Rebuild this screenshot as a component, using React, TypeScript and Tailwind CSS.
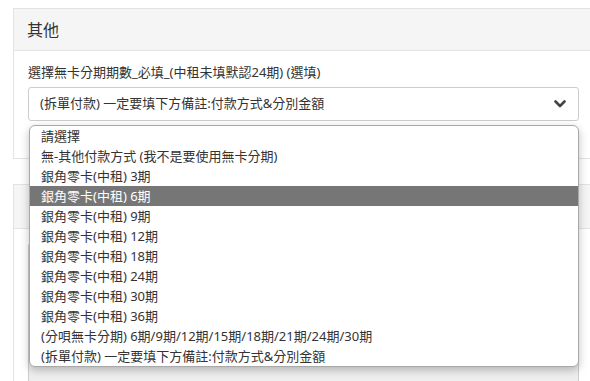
import React from "react";

const options = [
  "請選擇",
  "無-其他付款方式 (我不是要使用無卡分期)",
  "銀角零卡(中租) 3期",
  "銀角零卡(中租) 6期",
  "銀角零卡(中租) 9期",
  "銀角零卡(中租) 12期",
  "銀角零卡(中租) 18期",
  "銀角零卡(中租) 24期",
  "銀角零卡(中租) 30期",
  "銀角零卡(中租) 36期",
  "(分唄無卡分期) 6期/9期/12期/15期/18期/21期/24期/30期",
  "(拆單付款) 一定要填下方備註:付款方式&分別金額",
];

export default function App() {
  return (
    <div
      className="relative w-[590px] h-[381px] overflow-hidden bg-white text-[#333]"
      style={{ fontFamily: '"Noto Sans", "Noto Sans CJK TC", sans-serif' }}
    >
      {/* 其他 panel */}
      <div className="mt-[8px] ml-[13px] w-[620px] border border-[#e3e3e3]">
        <div className="h-[42px] bg-[#f5f5f5] border-b border-[#e3e3e3] flex items-center pl-[13px] text-[16px]">
          其他
        </div>
        <div className="pt-[12px] pb-[37px] pl-[14px]">
          <div className="text-[13px] leading-[18px] mb-[6px]">
            選擇無卡分期期數_必填_(中租未填默認24期) (選填)
          </div>
          <div className="w-[551px] h-[34px] border border-[#ccc] rounded-[3px] flex items-center justify-between pl-[11px] pr-[12px]">
            <span className="text-[13px] whitespace-nowrap">(拆單付款) 一定要填下方備註:付款方式&amp;分別金額</span>
            <svg width="12" height="8" viewBox="0 0 12 8" fill="none">
              <path d="M1.5 1.5 L6 6 L10.5 1.5" stroke="#444" strokeWidth="2.6" strokeLinecap="round" strokeLinejoin="round" />
            </svg>
          </div>
        </div>
      </div>

      {/* next panel, under the open list */}
      <div className="mt-[25px] ml-[13px] w-[620px] border border-[#e3e3e3]">
        <div className="h-[44px] bg-[#f5f5f5] border-b border-[#e3e3e3]" />
        <div className="pt-[14px] pl-[14px]">
          <div className="w-[551px] h-[200px] border border-[#ccc] rounded-[3px] bg-[#eeeeee]" />
        </div>
      </div>

      {/* open select list */}
      <div className="absolute left-[29px] top-[125px] w-[550px] border border-[#a9a9a9] rounded-[6px] bg-white shadow-[0_3px_8px_rgba(0,0,0,0.25)] overflow-hidden">
        {options.map((o, i) => (
          <div
            key={o}
            className={
              "h-[20px] leading-[20px] pl-[11px] text-[13px] whitespace-nowrap " +
              (i === 3 ? "bg-[#767676] text-white" : "text-[#333]")
            }
          >
            {o}
          </div>
        ))}
      </div>
    </div>
  );
}
